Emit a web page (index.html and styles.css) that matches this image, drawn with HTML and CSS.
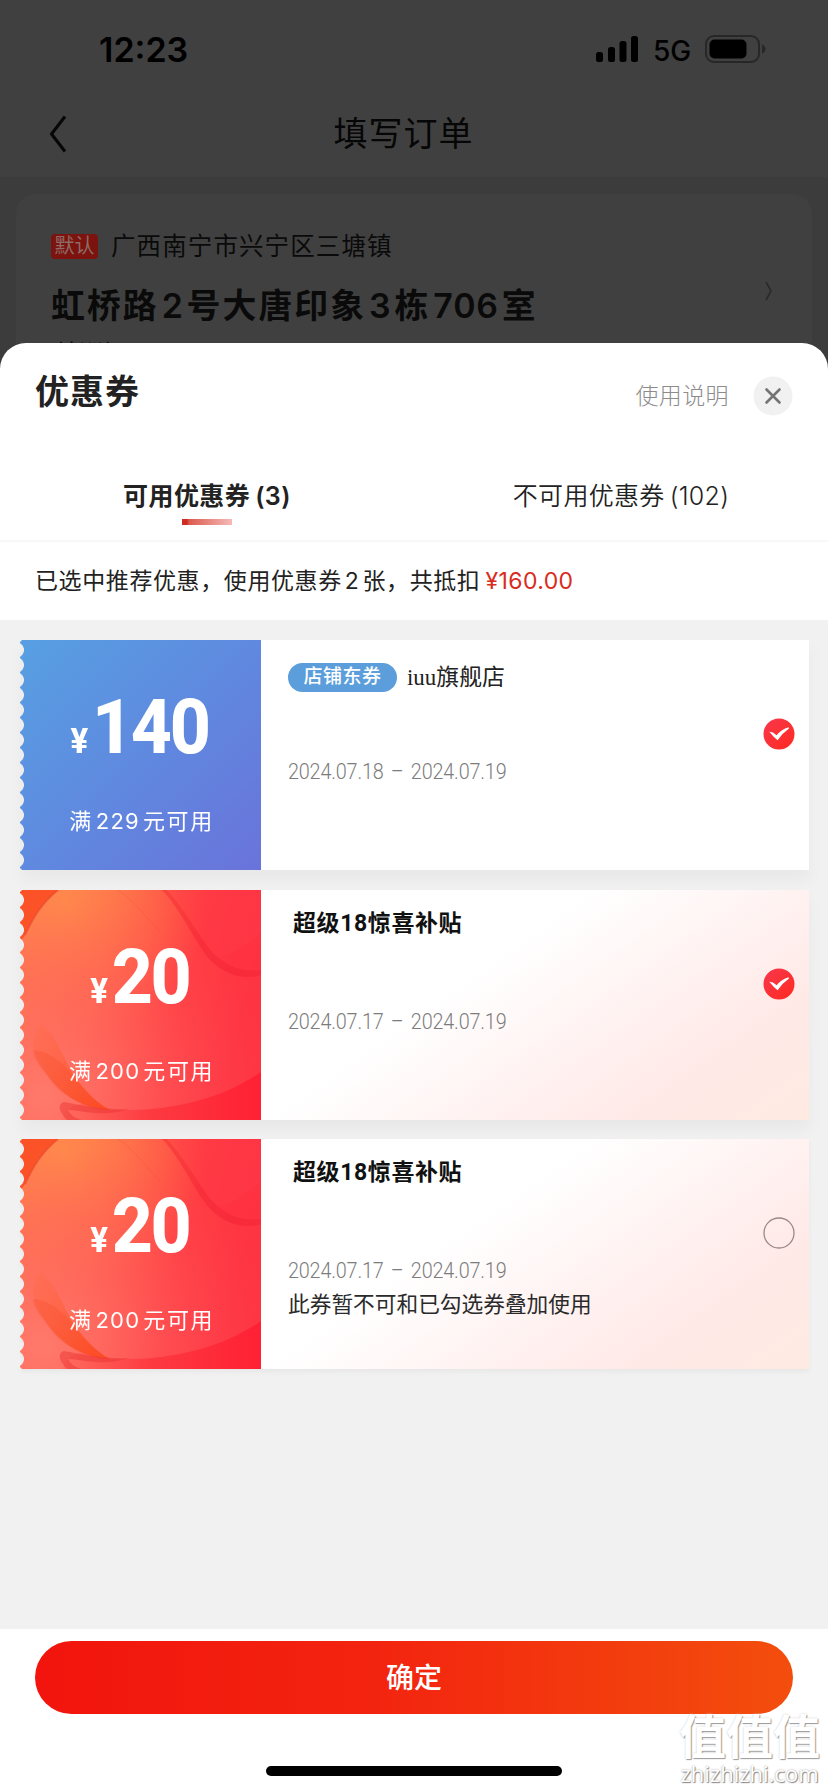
FILE: index.html
```html
<!DOCTYPE html>
<html lang="zh-CN">
<head>
<meta charset="utf-8">
<title>优惠券</title>
<link rel="stylesheet" href="styles.css">
</head>
<body>
<svg class="defs" width="0" height="0" aria-hidden="true">
  <defs>
    <linearGradient id="warm" x1="0" y1="0" x2="1" y2="0.25">
      <stop offset="0" stop-color="#ff7e4a"/><stop offset="0.4" stop-color="#ff6048"/><stop offset="0.75" stop-color="#ff3c42"/><stop offset="1" stop-color="#fe3442"/>
    </linearGradient>
    <radialGradient id="glow" cx="0.18" cy="0.06" r="0.6">
      <stop offset="0" stop-color="#ff944c" stop-opacity=".8"/><stop offset="1" stop-color="#ff8050" stop-opacity="0"/>
    </radialGradient>
    <radialGradient id="pink" cx="0.1" cy="0.9" r="0.95">
      <stop offset="0" stop-color="#ff7c70" stop-opacity=".9"/><stop offset="1" stop-color="#ff5058" stop-opacity="0"/>
    </radialGradient>
    <linearGradient id="leaf" x1="0" y1="0" x2=".7" y2="1">
      <stop offset="0" stop-color="#ff6a40" stop-opacity=".2"/><stop offset="1" stop-color="#ff4c22" stop-opacity=".9"/>
    </linearGradient>
    <linearGradient id="base" x1="0" y1="0" x2="1" y2="0">
      <stop offset="0" stop-color="#ff6c60"/><stop offset=".45" stop-color="#fd3a40"/><stop offset="1" stop-color="#ff2034"/>
    </linearGradient>
    <linearGradient id="tick" x1="0" y1="0" x2="1" y2="1">
      <stop offset="0" stop-color="#f8374c"/><stop offset="1" stop-color="#ff2a20"/>
    </linearGradient>
    <symbol id="art" viewBox="0 0 241 230" preserveAspectRatio="none">
      <rect width="241" height="230" fill="url(#warm)"/>
      <rect width="241" height="230" fill="url(#glow)"/>
      <rect width="241" height="230" fill="url(#pink)"/>
      <path d="M0 0H38C22 13 14 26 5 45L0 52Z" fill="#fb5228"/>
      <path d="M38 0C22 13 14 26 5 45" fill="none" stroke="#e84a30" stroke-width="2" opacity=".6"/>
      <path d="M142 0C160 18 175 52 190 70C206 86 226 90 241 85V0Z" fill="#ff2038" opacity=".15"/>
      <path d="M142 0C160 18 175 52 190 70C206 86 226 90 241 85V80C220 83 205 75 192 62C176 42 164 18 147 0Z" fill="#e81830" opacity=".26"/>
      <path d="M198 67C215 64 228 55 241 42V0H150C168 22 180 52 198 67Z" fill="#ff4050" opacity=".25"/>
      <path d="M98 0C116 12 126 28 140 42" fill="none" stroke="#f03838" opacity=".22"/>
      <path d="M241 182C200 210 150 222 88 220C68 216 54 205 42 230H241Z" fill="url(#base)"/>
      <path d="M20 134C36 142 43 170 56 188C67 203 77 213 90 220C64 219 40 204 27 184C14 166 7 148 20 134Z" fill="url(#leaf)"/>
      <path d="M13 160C34 162 48 178 57 191C67 204 77 213 90 220C62 218 40 205 28 187C20 176 14 170 13 160Z" fill="#f64b28" opacity=".3"/>
      <path d="M47 230C39 222 37 214 44 212C65 216 85 220 110 219C82 228 62 220 48 220C51 225 54 228 62 230Z" fill="#e83030" opacity=".45"/>
    </symbol>
    <symbol id="checked" viewBox="0 0 32 32">
      <circle cx="16" cy="16" r="15.5" fill="url(#tick)"/>
      <path d="M6.3 13.8Q9.7 13.6 13.6 17.2Q18.5 11.5 25.6 9.3L26 10.6Q19.5 15.2 14.6 22.2Q10.8 19.5 6.3 13.8Z" fill="#fff"/>
    </symbol>
  </defs>
</svg>
<div class="page">
  <header class="status">
    <span class="clock">12:23</span>
    <svg class="signal" viewBox="0 0 43 27"><g fill="#000"><rect x="0" y="16" width="7" height="10" rx="2.5"/><rect x="12" y="11" width="7" height="15" rx="2.5"/><rect x="23.500" y="5" width="7" height="21" rx="2.5"/><rect x="35" y="0" width="7" height="26" rx="2.500"/></g></svg>
    <span class="net">5G</span>
    <svg class="battery" viewBox="0 0 61 28"><rect x="1" y="1" width="53" height="26" rx="8" fill="none" stroke="#272727" stroke-width="2"/><rect x="4.500" y="4.500" width="37" height="19" rx="5" fill="#000"/><path d="M57 9.500Q60.500 11 60.500 14T57 18.500Z" fill="#272727"/></svg>
  </header>
  <nav class="nav">
    <svg class="back" viewBox="0 0 18 38"><path d="M16 1.500L2.500 19L16 36.500" fill="none" stroke="#060606" stroke-width="3" stroke-linejoin="round"/></svg>
    <h1 class="nav-title">填写订单</h1>
  </nav>
  <section class="address">
    <div class="address-main">
      <div class="region"><span class="default">默认</span><span class="region-text">广西南宁市兴宁区三塘镇</span></div>
      <div class="street">虹桥路<i>2</i>号大唐印象<i>3</i>栋<i>706</i>室</div>
      <div class="receiver">韩洲妍</div>
    </div>
    <svg class="go" viewBox="0 0 10 20"><path d="M2 1L7 10L2 19" fill="none" stroke="#2a2a2a" stroke-width="1.600"/></svg>
  </section>
  <main class="sheet">
    <div class="sheet-head">
      <h2 class="sheet-title">优惠券</h2>
      <span class="help">使用说明</span>
      <svg class="close" viewBox="0 0 40 40"><circle cx="20" cy="20" r="19.500" fill="#f1f1f1"/><path d="M13.500 13.500L26.500 26.500M26.500 13.500L13.500 26.500" stroke="#747474" stroke-width="2.600" stroke-linecap="round"/></svg>
    </div>
    <div class="tabs">
      <div class="tab active"><span>可用优惠券<i>(3)</i></span></div>
      <div class="tab"><span>不可用优惠券<i>(102)</i></span></div>
    </div>
    <p class="summary">已选中推荐优惠，使用优惠券<i>2</i>张，共抵扣<b>¥160.00</b></p>
    <div class="list">
      <article class="coupon">
        <div class="value blue">
          <div class="price"><small>¥</small>140</div>
          <div class="rule">满<i>229</i>元可用</div>
        </div>
        <div class="info">
          <div class="shop"><span class="pill">店铺东券</span><span class="shop-name">iuu旗舰店</span></div>
          <div class="dates">2024.07.18 – 2024.07.19</div>
        </div>
        <svg class="pick"><use href="#checked"/></svg>
      </article>
      <article class="coupon blush">
        <div class="value red">
          <svg class="art"><use href="#art"/></svg>
          <div class="price"><small>¥</small>20</div>
          <div class="rule">满<i>200</i>元可用</div>
        </div>
        <div class="info">
          <div class="name">超级18惊喜补贴</div>
          <div class="dates">2024.07.17 – 2024.07.19</div>
        </div>
        <svg class="pick"><use href="#checked"/></svg>
      </article>
      <article class="coupon blush last">
        <div class="value red">
          <svg class="art"><use href="#art"/></svg>
          <div class="price"><small>¥</small>20</div>
          <div class="rule">满<i>200</i>元可用</div>
        </div>
        <div class="info">
          <div class="name">超级18惊喜补贴</div>
          <div class="dates">2024.07.17 – 2024.07.19</div>
          <div class="note">此券暂不可和已勾选券叠加使用</div>
        </div>
        <svg class="pick" viewBox="0 0 32 32"><circle cx="16" cy="16" r="15" fill="none" stroke="#9a8886" stroke-width="1.300"/></svg>
      </article>
    </div>
    <footer class="footer">
      <button class="confirm">确定</button>
      <div class="home"></div>
    </footer>
  </main>
  <div class="mark"><div class="mark-cn">值值值</div><div class="mark-url">zhizhizhi.com</div></div>
</div>
</body>
</html>
```
FILE: styles.css
```css
* { box-sizing: border-box; }
body {
  margin: 0;
  font-family: Inter, "Noto Sans CJK SC", sans-serif;
  color: #222;
}
i { font-style: normal; }
h1, h2, p { margin: 0; }
svg { display: block; flex: none; }
.defs { position: absolute; }

.page {
  position: relative;
  width: 828px;
  height: 1792px;
  overflow: hidden;
  display: flex;
  flex-direction: column;
  background: #3c3c3c;
}

.status {
  height: 98px;
  padding: 1px 62px 0 99px;
  display: flex;
  align-items: center;
  background: #404040;
  color: #000;
}
.clock { flex: 1; font-size: 34px; font-weight: 600; line-height: 40px; }
.signal { width: 43px; height: 27px; margin-right: 14px; }
.net { width: 38px; font-size: 28px; font-weight: 500; line-height: 32px; margin: 3px 14px 0 0; white-space: nowrap; }
.battery { width: 61px; height: 28px; margin-top: -2px; }

.nav {
  height: 79px;
  padding: 0 61px 0 49px;
  display: grid;
  grid-template-columns: 18px 1fr 18px;
  background: #404040;
}
.back { width: 18px; height: 38px; margin-top: 17px; }
.nav-title {
  margin-top: 12px;
  padding-right: 9px;
  text-align: center;
  font-size: 34px;
  font-weight: 400;
  line-height: 48px;
  letter-spacing: 1px;
  color: #060606;
}

.address {
  height: 149px;
  margin: 17px 16px 0;
  padding: 37px 38px 0 35px;
  display: flex;
  justify-content: space-between;
  overflow: hidden;
  border-radius: 20px 20px 0 0;
  background: #404040;
  color: #0a0a0a;
}
.region { display: flex; align-items: center; height: 30px; gap: 13px; }
.default {
  width: 47px;
  height: 25px;
  border-radius: 4px;
  background: #7c130e;
  color: #8e6b66;
  font-size: 20px;
  line-height: 24px;
  text-align: center;
}
.region-text { font-size: 24.500px; line-height: 30px; letter-spacing: 1.100px; }
.street {
  margin-top: 23px;
  font-size: 33.900px;
  font-weight: 600;
  line-height: 44px;
  letter-spacing: 2px;
  white-space: nowrap;
}
.street i { margin: 0 3px; letter-spacing: .8px; }
.receiver { margin: 11px 0 0 4px; font-size: 24px; line-height: 30px; }
.go { width: 10px; height: 20px; margin-top: 50px; }

.sheet {
  flex: 1;
  display: flex;
  flex-direction: column;
  overflow: hidden;
  border-radius: 26px 26px 0 0;
  background: #fff;
}
.sheet-head {
  height: 105px;
  padding: 0 35px;
  display: flex;
  align-items: flex-start;
}
.sheet-title { flex: 1; margin-top: 24px; font-size: 34px; font-weight: 600; line-height: 50px; letter-spacing: 1px; }
.help { margin: 36px 24px 0 0; font-size: 23px; font-weight: 300; line-height: 34px; letter-spacing: .4px; color: #8c8c8c; }
.close { width: 40px; height: 40px; margin-top: 33px; }

.tabs { display: grid; grid-template-columns: 1fr 1fr; height: 94px; border-bottom: 2px solid #f8f8f8; }
.tab { position: relative; padding-top: 30px; text-align: center; font-size: 25px; line-height: 36px; letter-spacing: .4px; }
.tab:last-child { font-weight: 350; letter-spacing: .3px; }
.tab i { margin-left: 5px; }
.tab.active { font-weight: 600; }
.active::after {
  content: "";
  position: absolute;
  left: 182px;
  top: 71px;
  width: 50px;
  height: 6px;
  background: linear-gradient(90deg, #cf2c22 0 5px, #dc5b50 7px, #f6bab8);
}
.summary {
  height: 78px;
  padding: 21px 0 0 35px;
  font-size: 23px;
  line-height: 36px;
  letter-spacing: .6px;
  white-space: nowrap;
}
.summary i { margin: 0 3px; }
.summary b { margin-left: 5px; font-weight: 400; letter-spacing: .4px; color: #d92c20; }

.list {
  flex: 1;
  padding: 20px 19px 0 20px;
  display: flex;
  flex-direction: column;
  gap: 19.500px;
  background: #f1f1f1;
}
.coupon {
  height: 230px;
  display: grid;
  grid-template-columns: 241px 1fr 32px;
  padding-right: 14px;
  background: linear-gradient(#fff, #fff) 241px 0 no-repeat;
  filter: drop-shadow(0 10px 7px rgba(0, 0, 0, .035));
}
.blush { background-image: linear-gradient(145deg, #fff 38%, #fff2f1 62%, #ffe9e7 80%, #ffeae2); background-size: 548px 230px; }
.last { filter: drop-shadow(0 3px 2px rgba(0, 0, 0, .04)); }
.value {
  position: relative;
  display: flex;
  flex-direction: column;
  align-items: center;
  color: #fff;
  -webkit-mask: radial-gradient(circle at -4px 7.500px, transparent 7.600px, #000 8.200px) 0 2.500px / 100% 15px;
  mask: radial-gradient(circle at -4px 7.500px, transparent 7.600px, #000 8.200px) 0 2.500px / 100% 15px;
}
.blue { background: linear-gradient(135deg, #57a0e2, #6087df 55%, #6a73da); }
.art { position: absolute; inset: 0; width: 241px; height: 230px; }
.price {
  position: relative;
  margin-top: 42px;
  padding-right: 2px;
  transform: scaleX(.94);
  font-family: Roboto, sans-serif;
  font-size: 76px;
  font-weight: 800;
  line-height: 90px;
  letter-spacing: -2.500px;
}
.price small { margin-right: 4px; font-size: 35px; letter-spacing: 0; }
.rule { position: relative; margin: 17px -2px 0 0; font-size: 22px; line-height: 34px; letter-spacing: 1.600px; }
.rule i { margin: 0 3px; letter-spacing: 1.200px; }
.info { padding-left: 27px; display: flex; flex-direction: column; align-items: flex-start; }
.shop { display: flex; align-items: center; height: 30px; margin-top: 22px; gap: 10px; }
.pill {
  width: 109px;
  height: 29px;
  border-radius: 15px;
  background: #5b9edb;
  color: #fff;
  font-size: 19px;
  font-weight: 500;
  line-height: 28px;
  text-align: center;
  letter-spacing: .5px;
}
.shop-name { padding-top: 1px; font-family: "Liberation Serif", "Noto Sans CJK SC", serif; font-size: 22.900px; line-height: 30px; }
.name { margin: 17px 0 0 5px; height: 35px; font-family: Roboto, "Noto Sans CJK SC", sans-serif; font-size: 23px; line-height: 34px; font-weight: 700; letter-spacing: .6px; color: #111; white-space: nowrap; }
.dates { margin-top: 66px; transform: scaleX(.88); transform-origin: left; font-family: Roboto, sans-serif; font-size: 22.500px; font-weight: 300; line-height: 26px; letter-spacing: -.2px; word-spacing: 3px; color: #7c7c7c; white-space: nowrap; }
.note { margin-top: 4px; font-size: 21.700px; line-height: 34px; color: #2a2a2a; white-space: nowrap; }
.pick { width: 32px; height: 32px; margin-top: 78px; }

.footer { height: 163px; padding-top: 12px; display: flex; flex-direction: column; align-items: center; background: #fff; }
.confirm {
  width: 758px;
  height: 73px;
  border: 0;
  border-radius: 37px;
  background: linear-gradient(90deg, #f2140d, #f3240f 45%, #f34e0d);
  color: #fff;
  font: 500 28px/73px Inter, "Noto Sans CJK SC", sans-serif;
}
.home { width: 296px; height: 10px; margin-top: 52px; border-radius: 5px; background: #000; }

.mark { position: absolute; left: 677px; top: 1706px; width: 145px; color: #fff; text-align: center; }
.mark-cn { font: 700 47px/56px "Noto Sans CJK SC", sans-serif; white-space: nowrap; text-shadow: 1px 1px 1px #999, 0 0 2px #ccc; }
.mark-url { font: 400 22px/22px "Open Sans", sans-serif; white-space: nowrap; text-shadow: 1px 1px 1px #888, 0 0 2px #999; }
```
